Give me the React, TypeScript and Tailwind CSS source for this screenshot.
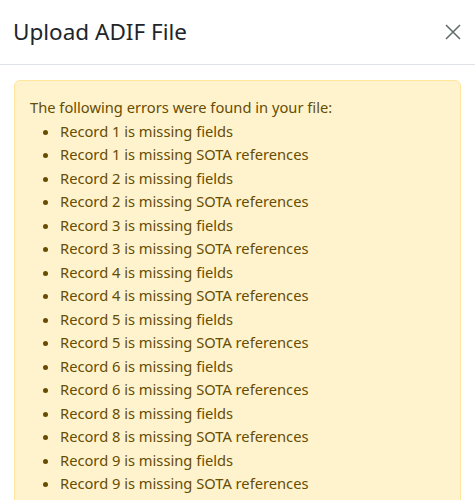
import React from 'react';

const errors: string[] = [
  'Record 1 is missing fields',
  'Record 1 is missing SOTA references',
  'Record 2 is missing fields',
  'Record 2 is missing SOTA references',
  'Record 3 is missing fields',
  'Record 3 is missing SOTA references',
  'Record 4 is missing fields',
  'Record 4 is missing SOTA references',
  'Record 5 is missing fields',
  'Record 5 is missing SOTA references',
  'Record 6 is missing fields',
  'Record 6 is missing SOTA references',
  'Record 8 is missing fields',
  'Record 8 is missing SOTA references',
  'Record 9 is missing fields',
  'Record 9 is missing SOTA references',
];

const App: React.FC = () => {
  return (
    <div className="h-[500px] w-[475px] overflow-hidden bg-white font-['Noto_Sans',sans-serif] text-[#212529]">
      {/* Header */}
      <div className="flex h-[65px] items-center justify-between border-b border-[#dee2e6] pl-[13px] pr-[14px]">
        <h5 className="text-[22.5px] leading-none">Upload ADIF File</h5>
        <button className="flex h-[16px] w-[16px] items-center justify-center text-[#5f6a65]">
          <svg viewBox="0 0 16 16" className="h-[16px] w-[16px]" fill="none" stroke="currentColor" strokeWidth="1.5">
            <path d="M1 1L15 15M15 1L1 15" />
          </svg>
        </button>
      </div>

      {/* Body */}
      <div className="px-[14px] pt-[15px]">
        <div className="rounded-[6px] border border-[#ffe69c] bg-[#fff3cd] px-[15px] pt-[15px] pb-4 text-[14.7px] leading-[23.5px] text-[#664d03]">
          <div>The following errors were found in your file:</div>
          <ul className="list-disc pl-[30px]">
            {errors.map((e, i) => (
              <li key={i}>{e}</li>
            ))}
          </ul>
        </div>
      </div>
    </div>
  );
};

export default App;
